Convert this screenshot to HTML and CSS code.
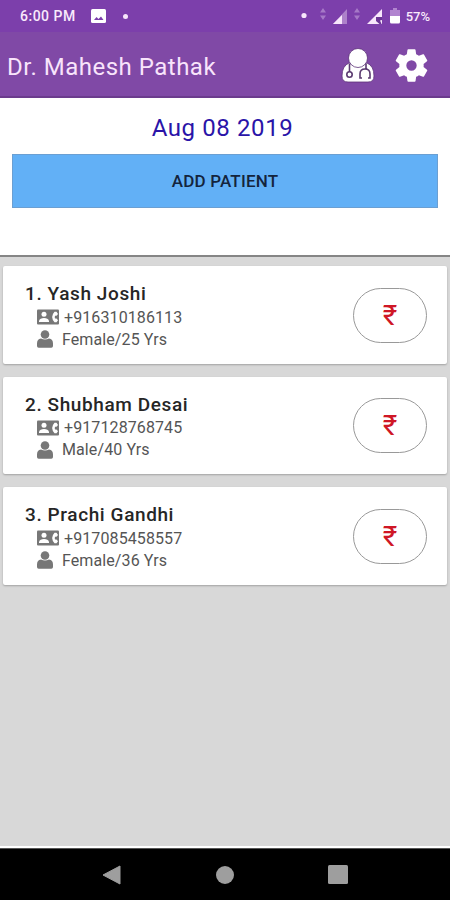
FILE: index.html
```html
<!DOCTYPE html>
<html lang="en">
<head>
    <meta charset="UTF-8">
    <meta name="viewport" content="width=device-width, initial-scale=1.0">
    <title>Patients</title>
    <link rel="stylesheet" href="styles.css">
</head>
<body>

    <!-- icons used in every patient card -->
    <svg class="defs" width="0" height="0">
        <symbol id="contact" viewBox="0 0 22 16">
            <rect y="0.500" width="22" height="15" rx="1" fill="#777"/>
            <circle cx="7" cy="5.300" r="2.500" fill="#fff"/>
            <path fill="#fff" d="M2 13v-1.300q1-2.700 5-2.700t5 2.700V13z"/>
            <path fill="#fff" d="M17.500 2.800h2L21 5l-1.500 1.700h-1.500q-.5 1.500 0 2.800h1.500L21 11.200l-1.500 2h-2Q12.800 8 17.500 2.800z"/>
        </symbol>
        <symbol id="person" viewBox="0 0 16 18">
            <g fill="#777">
                <circle cx="8" cy="4.500" r="4.300"/>
                <path d="M0 16v-2.500Q0 9 4 8.500q4 2 8 0 4 .5 4 5V16q0 1.700-1.700 1.700H1.700Q0 17.700 0 16z"/>
            </g>
        </symbol>
    </svg>

    <div class="status">
        <span class="time">6:00 PM</span>
        <svg class="picture" width="15" height="14" viewBox="0 0 15 14">
            <rect width="15" height="14" rx="1.500" fill="#fff"/>
            <path d="M3 11l2.500-3 2 2L10 7.500l2.500 3.500z" fill="#7c3fab"/>
        </svg>
        <span class="dot"></span>
        <svg class="signals" width="84" height="18" viewBox="0 0 84 18">
            <g fill="#f7e6fb">
                <circle cx="3" cy="8.500" r="2.600"/>
                <path opacity=".35" d="M22 1l3 4.500h-6zM22 13l3-4.500h-6z"/>
                <path opacity=".4" d="M46 2v15H32z"/>
                <path d="M41 8v9h-9z"/>
                <path opacity=".35" d="M56 1l3 4.500h-6zM56 13l3-4.500h-6z"/>
                <path d="M81 2v15H66z"/>
            </g>
            <path d="M75 10h6v3l-2 .5 1.500 3.500h-2L75 14z" fill="#6c3596"/>
        </svg>
        <svg class="battery" width="10" height="16" viewBox="0 0 10 16">
            <path fill="#b184cf" d="M3 0h4v2h3v7H0V2h3z"/>
            <path fill="#fff" d="M0 8h10v6q0 1.500-1.500 1.500h-7Q0 15.500 0 14z"/>
        </svg>
        <span class="percent">57%</span>
    </div>

    <header>
        <h1>Dr. Mahesh Pathak</h1>
        <svg class="doctor" width="34" height="36" viewBox="0 0 34 36">
            <path fill="#fff" stroke="#5d3478" stroke-width=".8" d="M8 15Q1 18 1 28q0 6 6 6h20q6 0 6-6 0-10-7-13-9 6-18 0z"/>
            <circle cx="17" cy="10" r="9.500" fill="#fff" stroke="#5d3478" stroke-width=".8"/>
            <g fill="none" stroke="#5b3b70" stroke-width="1.600">
                <path d="M8.500 16v8M25 16v5M21 30h-2v-4q0-5 5-5t5 5v4h-2"/>
                <circle cx="8.500" cy="26.500" r="2.700"/>
            </g>
        </svg>
        <svg class="gear" width="39" height="39" viewBox="0 0 24 24">
            <path fill="#fff" d="M19.430 12.980c.04-.32.07-.64.07-.98s-.03-.66-.07-.98l2.110-1.650c.19-.15.24-.42.12-.64l-2-3.460c-.12-.22-.39-.3-.61-.22l-2.490 1c-.52-.4-1.080-.73-1.690-.98l-.38-2.650C14.460 2.180 14.250 2 14 2h-4c-.25 0-.46.18-.49.42l-.38 2.650c-.61.25-1.170.59-1.690.98l-2.490-1c-.23-.09-.49 0-.61.22l-2 3.460c-.13.22-.07.49.12.64l2.110 1.650c-.04.32-.07.65-.07.98s.03.66.07.98l-2.110 1.650c-.19.15-.24.42-.12.64l2 3.460c.12.22.39.3.61.22l2.490-1c.52.4 1.080.73 1.690.98l.38 2.650c.03.24.24.42.49.42h4c.25 0 .46-.18.49-.42l.38-2.650c.61-.25 1.170-.59 1.690-.98l2.490 1c.23.09.49 0 .61-.22l2-3.460c.12-.22.07-.49-.12-.64l-2.110-1.650zM12 15.200a3.200 3.200 0 1 1 0-6.400 3.200 3.200 0 0 1 0 6.400z"/>
        </svg>
    </header>

    <section class="day">
        <p class="date">Aug 08 2019</p>
        <button>ADD PATIENT</button>
    </section>

    <main>
        <div class="card">
            <div class="info">
                <h2>1. Yash Joshi</h2>
                <p class="phone"><svg width="22" height="16"><use href="#contact"/></svg>+916310186113</p>
                <p class="age"><svg width="16" height="18"><use href="#person"/></svg>Female/25 Yrs</p>
            </div>
            <div class="pay">₹</div>
        </div>
        <div class="card">
            <div class="info">
                <h2>2. Shubham Desai</h2>
                <p class="phone"><svg width="22" height="16"><use href="#contact"/></svg>+917128768745</p>
                <p class="age"><svg width="16" height="18"><use href="#person"/></svg>Male/40 Yrs</p>
            </div>
            <div class="pay">₹</div>
        </div>
        <div class="card">
            <div class="info">
                <h2>3. Prachi Gandhi</h2>
                <p class="phone"><svg width="22" height="16"><use href="#contact"/></svg>+917085458557</p>
                <p class="age"><svg width="16" height="18"><use href="#person"/></svg>Female/36 Yrs</p>
            </div>
            <div class="pay">₹</div>
        </div>
    </main>

    <nav>
        <svg width="19" height="20" viewBox="0 0 19 20"><path d="M1 10L18 1v18z" fill="#9e9e9e" stroke="#9e9e9e" stroke-linejoin="round"/></svg>
        <svg width="18" height="18" viewBox="0 0 18 18"><circle cx="9" cy="9" r="9" fill="#9e9e9e"/></svg>
        <svg width="20" height="19" viewBox="0 0 20 19"><rect width="20" height="19" rx="1.500" fill="#9e9e9e"/></svg>
    </nav>

</body>
</html>
```
FILE: styles.css
```css
* {
    box-sizing: border-box;
}

body {
    font-family: Roboto, sans-serif;
    margin: 0;
    height: 900px;
    display: flex;
    flex-direction: column;
    overflow: hidden;
    background-color: #fff;
}

h1, h2, p {
    margin: 0;
}

svg {
    display: block;
    flex: none;
}

.defs {
    position: absolute;
}

.status {
    height: 32px;
    padding: 0 20px;
    display: flex;
    align-items: center;
    background-color: #7c3fab;
    color: #f9eafc;
    font-size: 13px;
    font-weight: 500;
    white-space: nowrap;
}

.time {
    width: 71px;
    font-size: 14px;
    letter-spacing: 0.5px;
}

.dot {
    width: 5px;
    height: 5px;
    margin-left: 17px;
    border-radius: 50%;
    background-color: #f7e6fb;
}

.signals {
    margin-left: auto;
}

.battery {
    margin: 0 6px 0 5px;
}

header {
    height: 66px;
    padding: 0 19px 0 7px;
    display: flex;
    align-items: center;
    background-color: #8049a6;
    border-bottom: 2px solid #6b3b8d;
}

h1 {
    flex: 1;
    color: #f8e4fb;
    font-size: 24px;
    font-weight: 400;
    letter-spacing: 0.5px;
    padding-top: 5px;
}

.doctor {
    margin-right: 17px;
}

.gear {
    margin-top: 3px;
}

.doctor {
    margin-top: 3px;
}

.day {
    height: 159px;
    padding: 13px 12px 0;
    border-bottom: 2px solid #858585;
    text-align: center;
}

.date {
    height: 43px;
    padding-right: 5px;
    line-height: 34px;
    color: #2a14a8;
    font-size: 24px;
    letter-spacing: 0.6px;
}

button {
    display: block;
    width: 100%;
    height: 54px;
    padding: 0;
    background-color: #62b0f6;
    border: 1px solid #6b9fd2;
    color: #14243c;
    font-family: inherit;
    font-size: 17px;
    font-weight: 500;
    letter-spacing: 0.2px;
}

main {
    flex: 1;
    padding: 9px 3px;
    display: flex;
    flex-direction: column;
    gap: 13px;
    background-color: #d8d8d8;
    border-bottom: 2px solid #fff;
}

.card {
    height: 97.5px;
    padding: 1px 20px 0 22px;
    display: flex;
    align-items: center;
    justify-content: space-between;
    background-color: #fff;
    border-radius: 2px;
    box-shadow: 0 1px 2px rgba(0, 0, 0, 0.25);
}

.info {
    padding-top: 2px;
}

h2 {
    color: #262626;
    font-size: 19px;
    font-weight: 500;
    line-height: 24px;
    letter-spacing: 0.6px;
}

.phone, .age {
    height: 22px;
    padding-left: 12px;
    display: flex;
    align-items: center;
    color: #555;
    font-size: 16px;
    letter-spacing: 0.1px;
}

.phone svg {
    margin-right: 5px;
}

.age svg {
    margin-right: 9px;
}

.pay {
    width: 74px;
    height: 55px;
    border: 1px solid #999;
    border-radius: 28px;
    color: #cf1726;
    font-size: 28px;
    line-height: 53px;
    text-align: center;
}

nav {
    height: 52px;
    padding: 0 102px;
    display: flex;
    align-items: center;
    justify-content: space-between;
    background-color: #000;
    border-top: 1px solid #555;
}
```
